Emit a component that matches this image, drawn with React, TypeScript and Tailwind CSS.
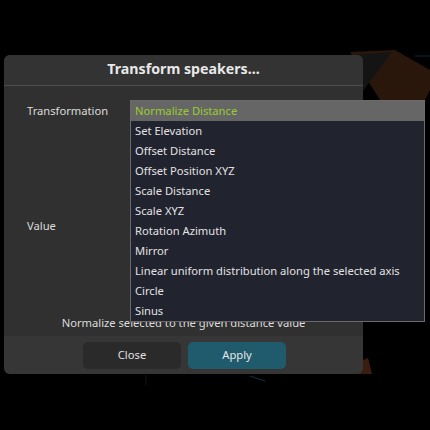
import React from 'react';

const options = [
  'Normalize Distance',
  'Set Elevation',
  'Offset Distance',
  'Offset Position XYZ',
  'Scale Distance',
  'Scale XYZ',
  'Rotation Azimuth',
  'Mirror',
  'Linear uniform distribution along the selected axis',
  'Circle',
  'Sinus',
];

// fond de scène 3D derrière la fenêtre
function Backdrop() {
  return (
    <svg className="absolute inset-0" width="430" height="430" viewBox="0 0 430 430">
      <polygon points="350,52 395,50 430,70 430,90 410,130 380,100" fill="#2a170c" />
      <polygon points="355,55 392,52 360,95" fill="#141414" />
      <line x1="415" y1="56" x2="430" y2="56" stroke="#0f2a33" strokeWidth="1" />
      <polygon points="330,374 372,374 368,358" fill="#3a1d0c" />
      <line x1="250" y1="376" x2="265" y2="381" stroke="#0e3440" strokeWidth="1" />
      <line x1="146" y1="375" x2="146" y2="385" stroke="#151515" strokeWidth="1" />
    </svg>
  );
}

export default function App() {
  return (
    <div
      className="relative w-[430px] h-[430px] bg-black overflow-hidden text-[11.2px] text-[#dcdcdc]"
      style={{ fontFamily: '"Noto Sans", "Open Sans", sans-serif' }}
    >
      <Backdrop />
      <div className="absolute left-[4px] top-[55px] w-[359px] h-[319px] rounded-[6px] bg-[#303030] flex flex-col overflow-hidden">
        <div className="h-[31px] pb-[3px] bg-[#333333] border-b border-[#4e4e4e] flex items-center justify-center text-[14.2px] font-bold text-[#e8e8e8]">
          Transform speakers...
        </div>
        <div className="flex-1 flex flex-col px-[23px]">
          <div className="h-[48px] pt-[3px] flex items-center">Transformation</div>
          <div className="flex-1 pt-[84px]">Value</div>
          <div className="pb-[4px] text-center -mx-[23px]">Normalize selected to the given distance value</div>
        </div>
        <div className="h-[38px] bg-[#363636] flex justify-center gap-[7px] pt-[6px] pl-[2px]">
          <button className="w-[98px] h-[27px] rounded-[5px] bg-[#2a2a2a] text-[#e0e0e0]">Close</button>
          <button className="w-[98px] h-[27px] rounded-[5px] bg-[#1f5a6d] text-[#e6e6e6]">Apply</button>
        </div>
      </div>
      <div className="absolute left-[130px] top-[100px] w-[295px] border border-[#6a6a6a] bg-[#21232e]">
        {options.map((o, i) => (
          <div
            key={o}
            className={
              i === 0
                ? 'h-[20px] leading-[20px] px-[4px] bg-[#666666] text-[#9ccc2c]'
                : 'h-[20px] leading-[20px] px-[4px] text-[#e2e2e2]'
            }
          >
            {o}
          </div>
        ))}
      </div>
    </div>
  );
}
